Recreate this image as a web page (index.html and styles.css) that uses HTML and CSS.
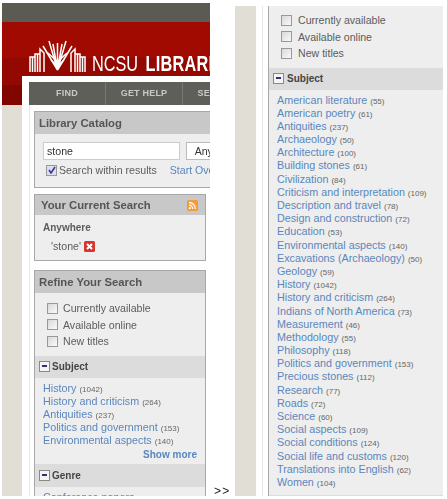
FILE: index.html
```html
<!DOCTYPE html>
<html lang="en">
<head>
    <meta charset="UTF-8">
    <title>NCSU Libraries Catalog</title>
    <link rel="stylesheet" href="styles.css">
</head>
<body>
    <div class="shots">
        <div class="shot shot-left">
            <div class="topbar"></div>
            <div class="masthead">
                <svg class="logo" width="57" height="32" viewBox="0 0 57 32" fill="none" stroke="#fff" stroke-width="1.5">
                    <path d="M1 32V17H6V32M3.5 32V17M6 32V14H11V32M8.5 32V14M11 32V9L15 13V32"/>
                    <path d="M56 32V17H51V32M53.5 32V17M51 32V14H46V32M48.5 32V14M46 32V9L42 13V32"/>
                    <path d="M28.5 30L14 6M28.5 30L20 1M28.5 30L24 4M28.5 30V3M28.5 30L33 4M28.5 30L37 1M28.5 30L43 6"/>
                    <path d="M19 13L28.5 22L38 13M22 20L28.5 26L35 20"/>
                </svg>
                <span class="wordmark">NCSU <b>LIBRARIES</b></span>
            </div>
            <div class="content">
                <div class="nav">
                    <span class="nav-item">FIND</span>
                    <span class="nav-item">GET HELP</span>
                    <span class="nav-item">SERVICES</span>
                </div>
                <div class="column">
                    <div class="box box-wide">
                        <div class="box-header">Library Catalog</div>
                        <div class="catalog-body">
                            <div class="search-row">
                                <span class="search-input">stone</span>
                                <span class="search-select">Anywhere</span>
                            </div>
                            <div class="within-row">
                                <span class="check check-on"><svg width="8" height="8" viewBox="0 0 8 8" fill="none" stroke="#33339a" stroke-width="1.5"><path d="M1 4L3 7L7 1"/></svg></span>
                                <span class="within-label">Search within results</span>
                                <a class="link start-over">Start Over</a>
                            </div>
                        </div>
                    </div>

                    <div class="box box-current">
                        <div class="box-header box-header-rss">
                            Your Current Search
                            <svg class="rss" width="11" height="11" viewBox="0 0 11 11">
                                <rect width="11" height="11" rx="1.5" fill="#f59a3a"/>
                                <circle cx="2.8" cy="8.2" r="1.1" fill="#fff"/>
                                <path d="M2 5.2A3.8 3.8 0 0 1 5.8 9M2 2.5A6.5 6.5 0 0 1 8.5 9" fill="none" stroke="#fff" stroke-width="1.3"/>
                            </svg>
                        </div>
                        <div class="current-body">
                            <div class="current-field">Anywhere</div>
                            <div class="current-term">
                                'stone'
                                <svg width="11" height="11" viewBox="0 0 11 11">
                                    <rect width="11" height="11" rx="1.5" fill="#d8352c"/>
                                    <path d="M3 3L8 8M8 3L3 8" stroke="#fff" stroke-width="2"/>
                                </svg>
                            </div>
                        </div>
                    </div>

                    <div class="box box-refine">
                        <div class="box-header">Refine Your Search</div>
                        <div class="checks">
                            <label class="check-row"><span class="check"></span>Currently available</label>
                            <label class="check-row"><span class="check"></span>Available online</label>
                            <label class="check-row"><span class="check"></span>New titles</label>
                        </div>
                        <div class="facet-header"><span class="minus"></span>Subject</div>
                        <ul class="facets">
                            <li><a class="link">History</a> <span class="count">(1042)</span></li>
                            <li><a class="link">History and criticism</a> <span class="count">(264)</span></li>
                            <li><a class="link">Antiquities</a> <span class="count">(237)</span></li>
                            <li><a class="link">Politics and government</a> <span class="count">(153)</span></li>
                            <li><a class="link">Environmental aspects</a> <span class="count">(140)</span></li>
                        </ul>
                        <div class="show-more"><a class="link">Show more</a></div>
                        <div class="facet-header facet-genre"><span class="minus"></span>Genre</div>
                        <ul class="facets">
                            <li><a class="link">Conference papers</a> <span class="count">(21)</span></li>
                        </ul>
                    </div>
                </div>
            </div>
        </div>

        <div class="arrows">&gt;&gt;</div>

        <div class="shot shot-right">
            <div class="content content-right">
                <div class="column">
                    <div class="box box-continued">
                        <div class="checks checks-right">
                            <label class="check-row"><span class="check"></span>Currently available</label>
                            <label class="check-row"><span class="check"></span>Available online</label>
                            <label class="check-row"><span class="check"></span>New titles</label>
                        </div>
                        <div class="facet-header"><span class="minus"></span>Subject</div>
                        <ul class="facets">
                            <li><a class="link">American literature</a> <span class="count">(55)</span></li>
                            <li><a class="link">American poetry</a> <span class="count">(61)</span></li>
                            <li><a class="link">Antiquities</a> <span class="count">(237)</span></li>
                            <li><a class="link">Archaeology</a> <span class="count">(50)</span></li>
                            <li><a class="link">Architecture</a> <span class="count">(100)</span></li>
                            <li><a class="link">Building stones</a> <span class="count">(61)</span></li>
                            <li><a class="link">Civilization</a> <span class="count">(84)</span></li>
                            <li><a class="link">Criticism and interpretation</a> <span class="count">(109)</span></li>
                            <li><a class="link">Description and travel</a> <span class="count">(78)</span></li>
                            <li><a class="link">Design and construction</a> <span class="count">(72)</span></li>
                            <li><a class="link">Education</a> <span class="count">(53)</span></li>
                            <li><a class="link">Environmental aspects</a> <span class="count">(140)</span></li>
                            <li><a class="link">Excavations (Archaeology)</a> <span class="count">(50)</span></li>
                            <li><a class="link">Geology</a> <span class="count">(59)</span></li>
                            <li><a class="link">History</a> <span class="count">(1042)</span></li>
                            <li><a class="link">History and criticism</a> <span class="count">(264)</span></li>
                            <li><a class="link">Indians of North America</a> <span class="count">(73)</span></li>
                            <li><a class="link">Measurement</a> <span class="count">(46)</span></li>
                            <li><a class="link">Methodology</a> <span class="count">(55)</span></li>
                            <li><a class="link">Philosophy</a> <span class="count">(118)</span></li>
                            <li><a class="link">Politics and government</a> <span class="count">(153)</span></li>
                            <li><a class="link">Precious stones</a> <span class="count">(112)</span></li>
                            <li><a class="link">Research</a> <span class="count">(77)</span></li>
                            <li><a class="link">Roads</a> <span class="count">(72)</span></li>
                            <li><a class="link">Science</a> <span class="count">(60)</span></li>
                            <li><a class="link">Social aspects</a> <span class="count">(109)</span></li>
                            <li><a class="link">Social conditions</a> <span class="count">(124)</span></li>
                            <li><a class="link">Social life and customs</a> <span class="count">(120)</span></li>
                            <li><a class="link">Translations into English</a> <span class="count">(62)</span></li>
                            <li><a class="link">Women</a> <span class="count">(104)</span></li>
                        </ul>
                        <div class="facet-header facet-end"></div>
                    </div>
                </div>
            </div>
        </div>
    </div>
</body>
</html>
```

FILE: styles.css
```css
html, body {
    margin: 0;
    padding: 0;
    height: 499px;
    overflow: hidden;
    background: #fff;
}
body {
    font-family: "Liberation Sans", Arial, sans-serif;
    font-size: 10.6px;
    color: #5c5c5c;
}
.shots {
    display: flex;
    align-items: flex-start;
    padding-left: 2px;
    filter: blur(0.3px);
}
.shot {
    height: 493px;
    overflow: hidden;
    background: #e0ded5;
}
.shot-left {
    width: 208px;
    flex: none;
    margin-top: 3px;
}
.shot-right {
    width: 208px;
    flex: none;
    margin-top: 6px;
    height: 490px;
}
.arrows {
    width: 25px;
    flex: none;
    margin-top: 485px;
    padding-left: 4px;
    box-sizing: border-box;
    font-size: 12px;
    letter-spacing: 1.2px;
    line-height: 13px;
    color: #222;
}
.topbar {
    height: 19px;
    background: #5b5b53;
}
.masthead {
    height: 83px;
    margin-bottom: -29px;
    padding: 18px 0 0 27px;
    box-sizing: border-box;
    display: flex;
    align-items: flex-start;
    background: linear-gradient(#a00a00 0, #a00a00 36px, #930800 36px, #930800 63px, #820600 63px);
    white-space: nowrap;
}
.logo {
    flex: none;
}
.wordmark {
    margin: 12px 0 0 6px;
    font-size: 22px;
    line-height: 24px;
    word-spacing: 4px;
    color: #fff;
    transform: scaleX(0.74);
    transform-origin: left center;
}
.wordmark b {
    letter-spacing: 0.3px;
}
.content {
    position: relative;
    margin-left: 20px;
    height: 420px;
    padding: 6px 0 0 7px;
    background: #fff;
    overflow: hidden;
}
.nav {
    display: flex;
    width: 230px;
    height: 23px;
    background: #5f5f5a;
}
.nav-item {
    width: 76px;
    flex: none;
    border-right: 1px solid #777;
    text-align: center;
    font-size: 9px;
    font-weight: bold;
    line-height: 23px;
    letter-spacing: 0.2px;
    color: #c8c8c8;
}
.column {
    width: 240px;
    padding: 6px 0 0 4px;
    border-left: 1px solid #e6e6e6;
}
.box {
    width: 170px;
    border: 1px solid #a8a8a8;
    background: #eee;
    margin-bottom: 9px;
}
.box-wide {
    width: 220px;
    margin-bottom: 6px;
}
.box-header {
    height: 22px;
    padding-left: 4px;
    background: #c8c8c8;
    font-size: 11.3px;
    font-weight: bold;
    line-height: 22px;
    color: #555;
}
.box-header-rss {
    display: flex;
    justify-content: space-between;
    align-items: center;
    padding: 0 7px 0 6px;
    height: 20px;
    line-height: 20px;
}
.catalog-body {
    height: 53px;
    padding: 8px 0 0 8px;
    box-sizing: border-box;
}
.search-row {
    display: flex;
    gap: 6px;
}
.search-input {
    width: 138px;
    height: 18px;
    padding-left: 3px;
    border: 1px solid #ccc;
    background: #fff;
    line-height: 17px;
    color: #333;
    box-sizing: border-box;
}
.search-select {
    width: 70px;
    height: 18px;
    padding-left: 8px;
    border: 1px solid #bbb;
    background: #fff;
    line-height: 16px;
    color: #333;
    box-sizing: border-box;
}
.within-row {
    display: flex;
    align-items: center;
    margin-top: 4px;
    padding-left: 3px;
}
.within-label {
    margin: 0 13px 0 2px;
}
.check {
    display: inline-flex;
    align-items: center;
    justify-content: center;
    width: 11px;
    height: 11px;
    flex: none;
    box-sizing: border-box;
    border: 1px solid #999;
    background: linear-gradient(135deg, #d8d8d8, #fafafa);
}
.check-on {
    background: #dde;
}
.link {
    color: #5a87bd;
}
.current-body {
    height: 45px;
    padding: 6px 0 0 8px;
    box-sizing: border-box;
}
.current-field {
    font-weight: bold;
    font-size: 10px;
    line-height: 14px;
}
.current-term {
    display: flex;
    align-items: center;
    gap: 3px;
    margin: 5px 0 0 8px;
    line-height: 13px;
}
.checks {
    padding: 7px 0 6px 12px;
}
.checks-right {
    padding: 6px 0 6px 12px;
}
.check-row {
    display: flex;
    align-items: center;
    gap: 5px;
    height: 16.5px;
}
.facet-header {
    display: flex;
    align-items: center;
    gap: 2px;
    height: 22px;
    padding-left: 4px;
    background: #dcdcdc;
    font-weight: bold;
    font-size: 10px;
    color: #444;
}
.minus {
    position: relative;
    width: 9px;
    height: 9px;
    flex: none;
    border: 1px solid #888;
    background: #f4f4f4;
}
.minus::after {
    content: "";
    position: absolute;
    left: 2px;
    top: 3px;
    width: 5px;
    height: 2px;
    background: #33336a;
}
.facets {
    list-style: none;
    margin: 0;
    padding: 4px 0 0 8px;
}
.facets li {
    height: 13.2px;
    line-height: 13.2px;
    white-space: nowrap;
    font-size: 10.75px;
}
.count {
    font-size: 8px;
    color: #666;
}
.show-more {
    margin-top: 1px;
    padding-right: 8px;
    text-align: right;
    font-weight: bold;
    font-size: 10px;
    line-height: 13px;
}
.facet-genre {
    margin-top: 3px;
    height: 23px;
}
.content-right {
    margin-left: 21px;
    padding: 0 0 0 6px;
    height: 490px;
}
.content-right .column {
    padding: 0 0 0 5px;
}
.box-continued {
    width: 180px;
    border-top: none;
    border-bottom: none;
    margin: 0;
}
.box-continued .facet-header {
    gap: 3px;
}
.box-continued .check-row {
    gap: 6px;
}
.facet-end {
    margin-top: 6px;
}
```
